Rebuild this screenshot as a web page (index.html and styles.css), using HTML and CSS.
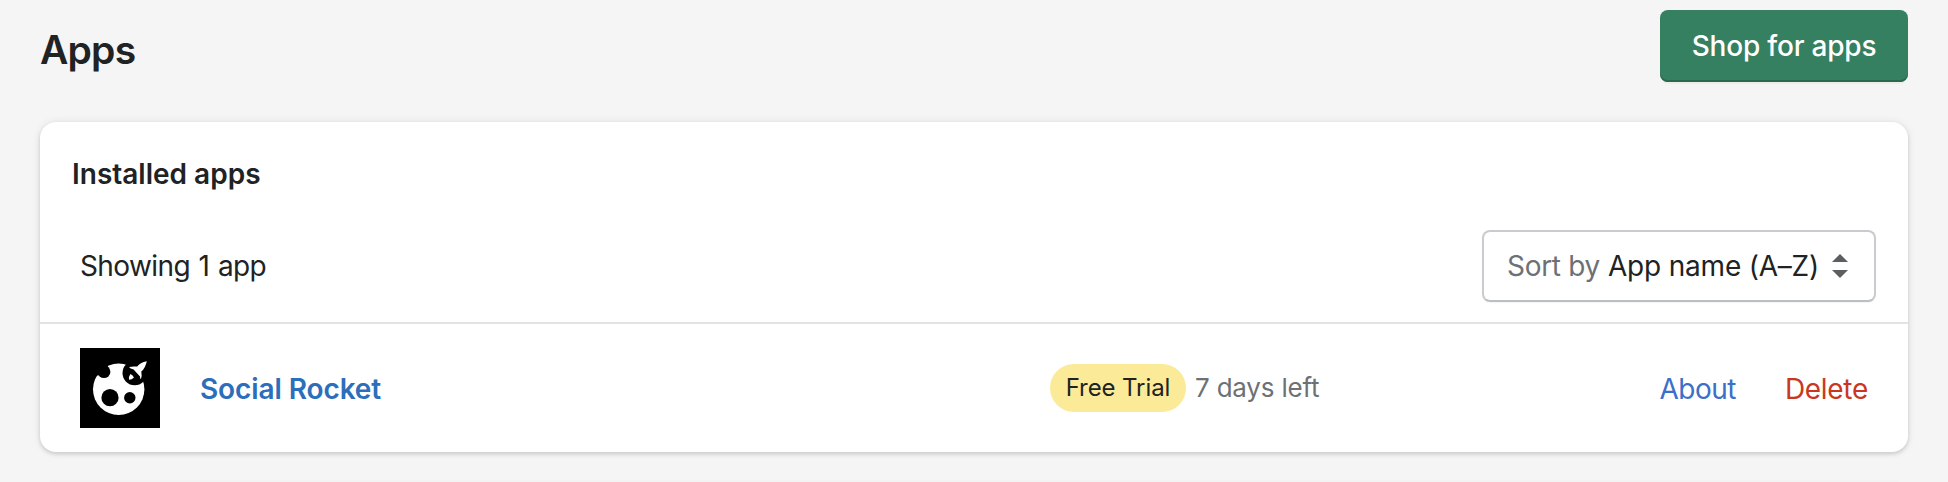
FILE: index.html
```html
<!DOCTYPE html>
<html lang="en">
<head>
<meta charset="utf-8">
<title>Apps</title>
<link rel="stylesheet" href="styles.css">
</head>
<body>
<main class="page">
  <header class="page-header">
    <h1 class="page-title">Apps</h1>
    <button class="primary-button" type="button">Shop for apps</button>
  </header>
  <section class="card">
    <h2 class="card-title">Installed apps</h2>
    <div class="toolbar">
      <span class="count">Showing 1 app</span>
      <button class="sort" type="button">
        <span class="sort-label">Sort by</span>
        <span class="sort-value">App name (A–Z)</span>
        <svg class="sort-icon" width="16" height="24" viewBox="0 0 16 24"><path d="M0 8 8 0l8 8zM0 16h16l-8 8z" fill="#5c5f62"/></svg>
      </button>
    </div>
    <div class="app-row">
      <svg class="app-logo" width="80" height="80" viewBox="0 0 80 80">
        <rect width="80" height="80" fill="#000"/>
        <circle cx="38.7" cy="41.3" r="25.7" fill="#fff"/>
        <g fill="#000">
          <circle cx="24" cy="23.7" r="6.4"/>
          <path d="M12 27.5h6.5L28 19l-2-5H12z"/>
          <circle cx="54.7" cy="25" r="12.2"/>
          <circle cx="30" cy="49.7" r="8.6"/>
          <circle cx="49.8" cy="49.7" r="5.7"/>
        </g>
        <g fill="#fff">
          <path d="M66.8 13.2Q60 14.4 57.2 18.6Q53 18 49 19Q50 20.6 53.6 21.6L60 28.4Q60 30.4 60.9 31.2Q62.2 28 61.3 23.6Q65.4 20 66.8 13.2z"/>
          <path d="M50.4 26Q52.8 27.2 54 29.4Q51.8 31.5 49 31.8Q48.6 28.2 50.4 26z"/>
        </g>
      </svg>
      <a class="app-name">Social Rocket</a>
      <div class="plan"><span class="badge">Free Trial</span><span class="days">7 days left</span></div>
      <div class="actions"><a class="about">About</a><a class="delete">Delete</a></div>
    </div>
  </section>
</main>
</body>
</html>
```
FILE: styles.css
```css
* { box-sizing: border-box; }
body {
  margin: 0;
  background: #f5f5f5;
  color: #202223;
  font: 400 28px/40px Inter, "Liberation Sans", sans-serif;
}
.page {
  height: 482px;
  padding: 10px 40px 0;
  background: linear-gradient(#f4f4f4, #f2f2f2) 50px 100% / calc(100% - 100px) 2px no-repeat;
}
.page-header { display: flex; justify-content: space-between; align-items: flex-start; height: 112px; }
.page-title { margin: 12px 0 0; font-size: 39px; line-height: 56px; font-weight: 600; letter-spacing: -0.8px; }
.primary-button {
  width: 248px;
  height: 72px;
  padding: 0;
  border: 0;
  border-radius: 8px;
  background: #368062;
  box-shadow: 0 2px 0 rgba(0, 0, 0, .03), inset 0 -2px 0 #2b684e;
  color: #fff;
  font: 500 28px/40px Inter, sans-serif;
  letter-spacing: -0.2px;
}
.card {
  height: 330px;
  border-radius: 16px;
  background: #fff;
  box-shadow: 0 0 10px rgba(23, 24, 24, .07), 0 2px 4px rgba(0, 0, 0, .15);
}
.card-title { margin: 0; padding: 32px 32px 0; font-size: 28px; line-height: 40px; font-weight: 600; }
.toolbar {
  display: flex;
  justify-content: space-between;
  align-items: center;
  height: 130px;
  padding: 16px 32px 0 40px;
  border-bottom: 2px solid #e1e3e5;
}
.count { letter-spacing: -0.6px; word-spacing: 1.3px; }
.sort {
  display: flex;
  align-items: center;
  width: 394px;
  height: 72px;
  padding: 0 0 0 23px;
  border: 2px solid #c9cccf;
  border-bottom-color: #babfc3;
  border-radius: 8px;
  background: #fff;
  box-shadow: 0 1px 1px rgba(0, 0, 0, .04);
  color: #202223;
  font: 400 28px/40px Inter, sans-serif;
}
.sort-label { width: 101px; text-align: left; color: #6d7175; white-space: nowrap; letter-spacing: -0.3px; }
.sort-value { width: 224px; text-align: left; white-space: nowrap; letter-spacing: -0.2px; }
.app-row {
  display: grid;
  grid-template-columns: 80px 810px 1fr auto;
  column-gap: 40px;
  align-items: center;
  height: 128px;
  padding: 0 40px;
}
.app-name { padding-top: 1px; color: #2c6ebb; font-weight: 600; letter-spacing: -0.1px; }
.plan { display: flex; align-items: center; gap: 9px; }
.badge { width: 136px; height: 48px; border-radius: 24px; background: #fbea98; font-size: 24px; line-height: 48px; text-align: center; letter-spacing: -0.1px; }
.days { color: #6d7175; font-size: 26px; letter-spacing: -0.2px; }
.actions { display: flex; gap: 49px; padding-top: 1px; }
.about { color: #3b6fc9; letter-spacing: -0.5px; }
.delete { color: #c9371f; letter-spacing: -0.3px; }
```
